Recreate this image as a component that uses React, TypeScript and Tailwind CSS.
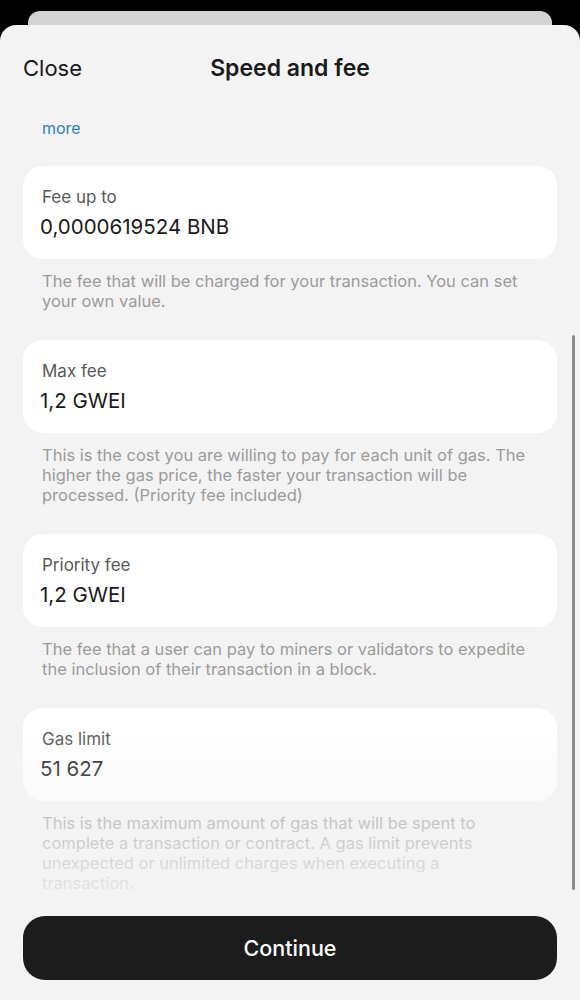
import React from "react";

const font = { fontFamily: "Inter, 'Noto Sans', 'Liberation Sans', sans-serif" };

type Item = { label: string; value: string; desc: string };

const items: Item[] = [
  {
    label: "Fee up to",
    value: "0,0000619524 BNB",
    desc: "The fee that will be charged for your transaction. You can set your own value.",
  },
  {
    label: "Max fee",
    value: "1,2 GWEI",
    desc: "This is the cost you are willing to pay for each unit of gas. The higher the gas price, the faster your transaction will be processed. (Priority fee included)",
  },
  {
    label: "Priority fee",
    value: "1,2 GWEI",
    desc: "The fee that a user can pay to miners or validators to expedite the inclusion of their transaction in a block.",
  },
  {
    label: "Gas limit",
    value: "51 627",
    desc: "This is the maximum amount of gas that will be spent to complete a transaction or contract. A gas limit prevents unexpected or unlimited charges when executing a transaction.",
  },
];

function Field({ item }: { item: Item }) {
  return (
    <div className="mt-[29px] first:mt-[28px]">
      <div className="mx-[23px] h-[93px] rounded-[20px] bg-white px-[19px] pt-[20px]">
        <div className="text-[17px] leading-[22px] text-[#595959]">{item.label}</div>
        <div className="-ml-[2px] mt-[6px] text-[20.5px] leading-[26px] text-[#1a1a1a]">{item.value}</div>
      </div>
      <p className="ml-[42px] mr-[46px] mt-[12px] text-[16.5px] leading-[20px] text-[#9b9b9b]">{item.desc}</p>
    </div>
  );
}

export default function App() {
  return (
    <div className="relative flex h-[1000px] w-[580px] flex-col overflow-hidden bg-black" style={font}>
      <div className="mx-[28px] mt-[11px] h-[14px] shrink-0 rounded-t-[12px] bg-[#d4d4d4]" />
      <div className="flex flex-1 flex-col rounded-t-[16px] bg-[#f3f3f3]">
        <div className="relative mt-[30px] flex h-[26px] shrink-0 items-center">
          <span className="ml-[23px] text-[22px] leading-[26px] text-[#1a1a1a]">Close</span>
          <span className="absolute left-0 right-0 text-center text-[23px] font-semibold leading-[26px] text-[#1a1a1a]">
            Speed and fee
          </span>
        </div>
        <div className="relative h-[827px] shrink-0 overflow-hidden">
          <div className="ml-[42px] mt-[37px] text-[16px] leading-[20px] text-[#2d7fc0]">more</div>
          <div className="flex flex-col">
            {items.map((it) => (
              <Field key={it.label} item={it} />
            ))}
          </div>
          <div className="absolute bottom-0 left-0 right-0 h-[180px] bg-linear-to-b from-[#f3f3f3]/0 to-[#f3f3f3]/90" />
          <div className="absolute right-[5px] top-[254px] h-[555px] w-[3px] rounded-full bg-[#8c8c8c]" />
        </div>
        <div className="mx-[23px] mt-[8px] flex h-[64px] shrink-0 items-center justify-center rounded-[22px] bg-[#1c1c1c]">
          <span className="text-[21.5px] font-medium text-white">Continue</span>
        </div>
      </div>
    </div>
  );
}
